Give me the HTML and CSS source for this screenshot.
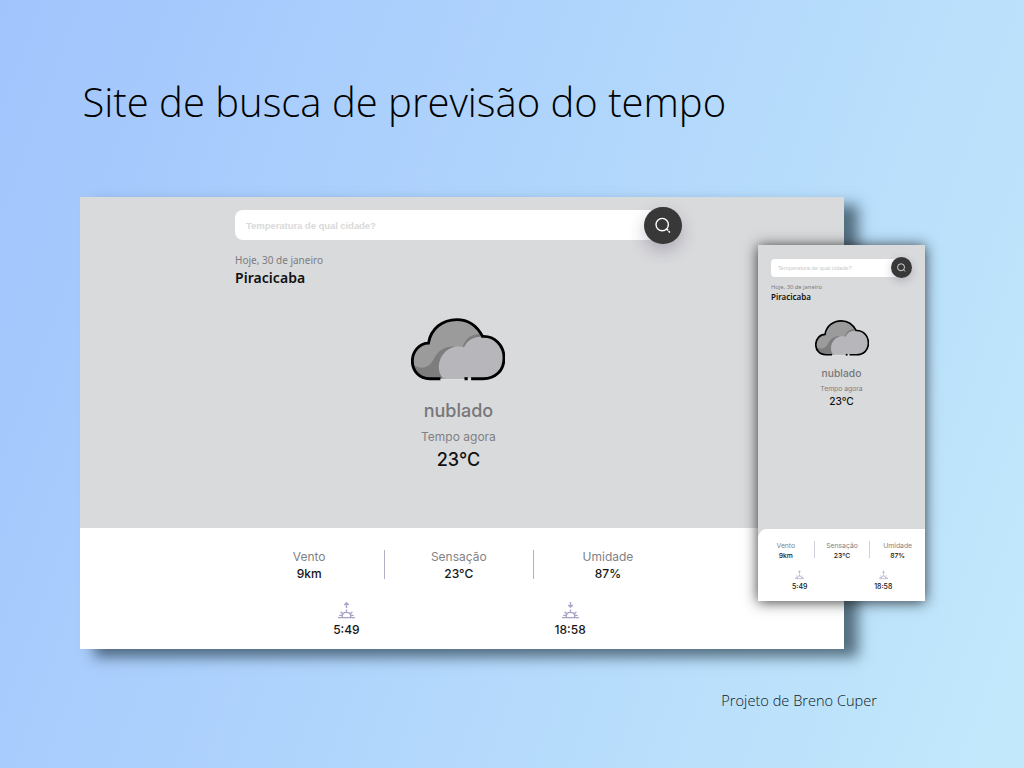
FILE: index.html
```
<!DOCTYPE html>
<html lang="pt-BR">
<head>
<meta charset="utf-8">
<title>Site de busca de previsão do tempo</title>
<link rel="stylesheet" href="styles.css">
</head>
<body>
<svg class="defs" width="0" height="0">
  <symbol id="cloud" viewBox="36 24 280 186">
    <path fill="#9b9b9b" d="M92 204C60 204 40 180 40 152C40 122 62 98 88 98C95 55 130 28 172 28C205 28 232 45 249 78L200 204Z"/>
    <path fill="#7d7d7d" d="M43 163C73 180 91 168 104 145C117 119 138 107 163 108L140 204H92C68 204 50 190 43 163ZM190 110C196 86 217 70 243 71L255 85L210 115Z"/>
    <path fill="#b7b6bb" d="M131 203C113 182 116 151 133 130C148 112 170 105 194 110C204 88 223 79 249 78C285 76 313 105 313 142C313 180 288 203 250 203Z"/>
    <path fill="none" stroke="#000" stroke-width="8.5" d="M124 204H92C60 204 40 180 40 152C40 122 62 98 88 98C95 55 130 28 172 28C205 28 232 45 249 78C285 76 313 105 313 142C313 180 288 204 250 204H215"/>
    <path stroke="#000" stroke-width="9" d="M195 204H205"/>
    <path stroke="#e0e0e2" stroke-width="4" d="M124 206H195M206 206H214"/>
  </symbol>
  <symbol id="search" viewBox="0 0 16 16">
    <circle cx="7.2" cy="7.6" r="6.2" fill="none" stroke="#fff" stroke-width="1.4"/>
    <path d="M12.1 12.4L12.6 12.9M14.1 14.7L14.4 15" stroke="#fff" stroke-width="1.7" stroke-linecap="round"/>
  </symbol>
  <symbol id="sun" viewBox="0 0 17 17">
    <path d="M0 15.6H17M4.3 15V14C4.3 9.2 12.7 9.2 12.7 14V15M8.5 7.5V10.5M2.6 9.8L4.6 11.7M14.4 9.8L12.4 11.7M1.3 13.4H4M13 13.4H15.7" fill="none" stroke="#a5a2c4" stroke-width="1.35"/>
  </symbol>
  <symbol id="sunrise" viewBox="0 0 17 17">
    <use href="#sun" width="17" height="17"/>
    <path d="M8.5 6V.5M6.3 3L8.5 .8L10.7 3" fill="none" stroke="#a5a2c4" stroke-width="1.35"/>
  </symbol>
  <symbol id="sunset" viewBox="0 0 17 17">
    <use href="#sun" width="17" height="17"/>
    <path d="M8.5 0V5.3M6.3 2.9L8.5 5.1L10.7 2.9" fill="none" stroke="#a5a2c4" stroke-width="1.35"/>
  </symbol>
</svg>
<main class="slide">
  <h1 class="title">Site de busca de previsão do tempo</h1>

  <section class="window desktop">
    <div class="top">
      <div class="search"><span class="field">Temperatura de qual cidade?</span><span class="button"><svg class="glass"><use href="#search"/></svg></span></div>
      <p class="date">Hoje, 30 de janeiro</p>
      <h2 class="city">Piracicaba</h2>
      <div class="now">
        <svg class="cloud"><use href="#cloud"/></svg>
        <p class="state">nublado</p>
        <p class="label">Tempo agora</p>
        <p class="temp">23°C</p>
      </div>
    </div>
    <div class="panel">
      <div class="stats">
        <div class="stat"><span class="name">Vento</span><b class="value">9km</b></div>
        <div class="stat"><span class="name">Sensação</span><b class="value">23°C</b></div>
        <div class="stat"><span class="name">Umidade</span><b class="value">87%</b></div>
      </div>
      <div class="suns">
        <div class="sun"><svg class="sun-icon"><use href="#sunrise"/></svg><b class="value">5:49</b></div>
        <div class="sun"><svg class="sun-icon"><use href="#sunset"/></svg><b class="value">18:58</b></div>
      </div>
    </div>
  </section>

  <section class="window phone">
    <div class="top">
      <div class="search"><span class="field">Temperatura de qual cidade?</span><span class="button"><svg class="glass"><use href="#search"/></svg></span></div>
      <p class="date">Hoje, 30 de janeiro</p>
      <h2 class="city">Piracicaba</h2>
      <div class="now">
        <svg class="cloud"><use href="#cloud"/></svg>
        <p class="state">nublado</p>
        <p class="label">Tempo agora</p>
        <p class="temp">23°C</p>
      </div>
    </div>
    <div class="panel">
      <div class="stats">
        <div class="stat"><span class="name">Vento</span><b class="value">9km</b></div>
        <div class="stat"><span class="name">Sensação</span><b class="value">23°C</b></div>
        <div class="stat"><span class="name">Umidade</span><b class="value">87%</b></div>
      </div>
      <div class="suns">
        <div class="sun"><svg class="sun-icon"><use href="#sunrise"/></svg><b class="value">5:49</b></div>
        <div class="sun"><svg class="sun-icon"><use href="#sunset"/></svg><b class="value">18:58</b></div>
      </div>
    </div>
  </section>

  <p class="credit">Projeto de Breno Cuper</p>
</main>
</body>
</html>
```
FILE: styles.css
```
* { box-sizing: border-box; }
body, h1, h2, p { margin: 0; }
body { font-family: Inter, "Liberation Sans", sans-serif; }
.defs { position: absolute; }
svg { display: block; }

.slide {
  position: relative;
  width: 1024px;
  height: 768px;
  overflow: hidden;
  padding: 72px 80px 0 80px;
  display: flex;
  flex-direction: column;
  align-items: flex-start;
  background: linear-gradient(110deg, #a1c4fd 0%, #c2e9fb 100%);
}
.title {
  height: 125px;
  padding-left: 2.5px;
  font: 300 40px/60px "Open Sans", sans-serif;
  white-space: nowrap;
  color: #000;
}
.credit {
  align-self: flex-end;
  margin: 40px 67px 0 0;
  font: 300 14.6px/22px "Open Sans", sans-serif;
  white-space: nowrap;
  color: #10181c;
}

.window { display: flex; flex-direction: column; background: #d9dadc; }
.top { flex: 1; }
.search { display: flex; align-items: center; }
.field {
  flex: 1;
  display: flex;
  align-items: center;
  background: #fff;
  color: #dadada;
  font-family: "Liberation Sans", sans-serif;
  font-weight: 700;
  white-space: nowrap;
}
.button {
  display: flex;
  align-items: center;
  justify-content: center;
  border-radius: 50%;
  background: #383838;
}
.date { font-family: "Noto Sans", sans-serif; color: #7c7c80; white-space: nowrap; }
.city { font-family: "Noto Sans", sans-serif; font-weight: 600; color: #111; }
.now { display: flex; flex-direction: column; align-items: center; }
.state { font-weight: 500; color: #77777a; }
.label { color: #808083; }
.temp { font-weight: 500; color: #111; }
.panel { background: #fff; }
.stats { display: grid; grid-template-columns: repeat(3, 1fr); }
.suns { display: grid; grid-template-columns: repeat(2, 1fr); }
.stat, .sun { display: flex; flex-direction: column; align-items: center; }
.stat + .stat { border-left: 1px solid #b3b1c8; }
.name { color: #828285; }
.value { font-weight: 500; color: #161616; }

.desktop {
  width: 764.4px;
  height: 452px;
  box-shadow: 14px 8px 13px rgba(20, 38, 50, .62);
}
.desktop .top { padding: 9.5px 162.5px 0 155px; }
.desktop .search { height: 37.5px; }
.desktop .field {
  height: 30px;
  margin-right: -19px;
  padding-left: 11px;
  border-radius: 8px;
  font-size: 9.6px;
  letter-spacing: -.1px;
}
.desktop .button { width: 37.5px; height: 37.5px; box-shadow: 0 7px 16px rgba(60, 50, 90, .28); }
.desktop .glass { width: 16px; height: 16px; }
.desktop .date { margin-top: 9px; font-size: 10px; line-height: 15px; }
.desktop .city { font-size: 14px; line-height: 20px; letter-spacing: .05px; }
.desktop .now { padding-top: 30px; }
.desktop .cloud { width: 94px; height: 63px; }
.desktop .state { margin-top: 18px; font-size: 18px; line-height: 24px; }
.desktop .label { margin-top: 5px; font-size: 12px; line-height: 18px; }
.desktop .temp { margin-top: 3px; font-size: 18px; line-height: 22px; }
.desktop .panel { height: 121px; padding: 22px 162.4px 0 154.6px; }
.desktop .stat { height: 29px; font-size: 12px; }
.desktop .name { line-height: 14px; }
.desktop .stat .value { margin-top: 2px; line-height: 16px; }
.desktop .suns { margin-top: 23px; }
.desktop .sun-icon { width: 17px; height: 17px; }
.desktop .sun .value { margin-top: 3px; font-size: 12px; line-height: 16px; }

.phone {
  position: absolute;
  left: 758px;
  top: 245px;
  width: 167px;
  height: 356px;
  box-shadow: 0 1px 13px rgba(20, 22, 25, .85);
}
.phone .top { padding: 12px 13px 0; }
.phone .search { height: 21px; }
.phone .field {
  height: 18px;
  margin-right: -11px;
  padding-left: 7px;
  border-radius: 4px;
  font-size: 5.7px;
  font-weight: 400;
  color: #c8c8c8;
}
.phone .button { width: 21px; height: 21px; box-shadow: 0 3px 8px rgba(60, 50, 90, .25); }
.phone .glass { width: 9px; height: 9px; }
.phone .date { margin-top: 5px; font-size: 5.8px; line-height: 9px; }
.phone .city { font-size: 8px; line-height: 10px; }
.phone .now { padding-top: 18px; }
.phone .cloud { width: 54px; height: 36px; }
.phone .state { margin-top: 10px; font-size: 10.3px; line-height: 14px; }
.phone .label { margin-top: 4px; font-size: 6.8px; line-height: 9px; }
.phone .temp { margin-top: 2px; font-size: 10.2px; line-height: 12px; }
.phone .panel { height: 72.5px; padding-top: 12px; border-radius: 9px 0 0 0; }
.phone .stat { height: 17px; font-size: 6.8px; }
.phone .stat + .stat { border-color: #d0cfdc; }
.phone .name { line-height: 9px; }
.phone .stat .value { margin-top: 1px; line-height: 9px; }
.phone .suns { margin-top: 12px; }
.phone .sun-icon { width: 9px; height: 10px; }
.phone .sun .value { margin-top: 2px; font-size: 7px; line-height: 9px; }
```
